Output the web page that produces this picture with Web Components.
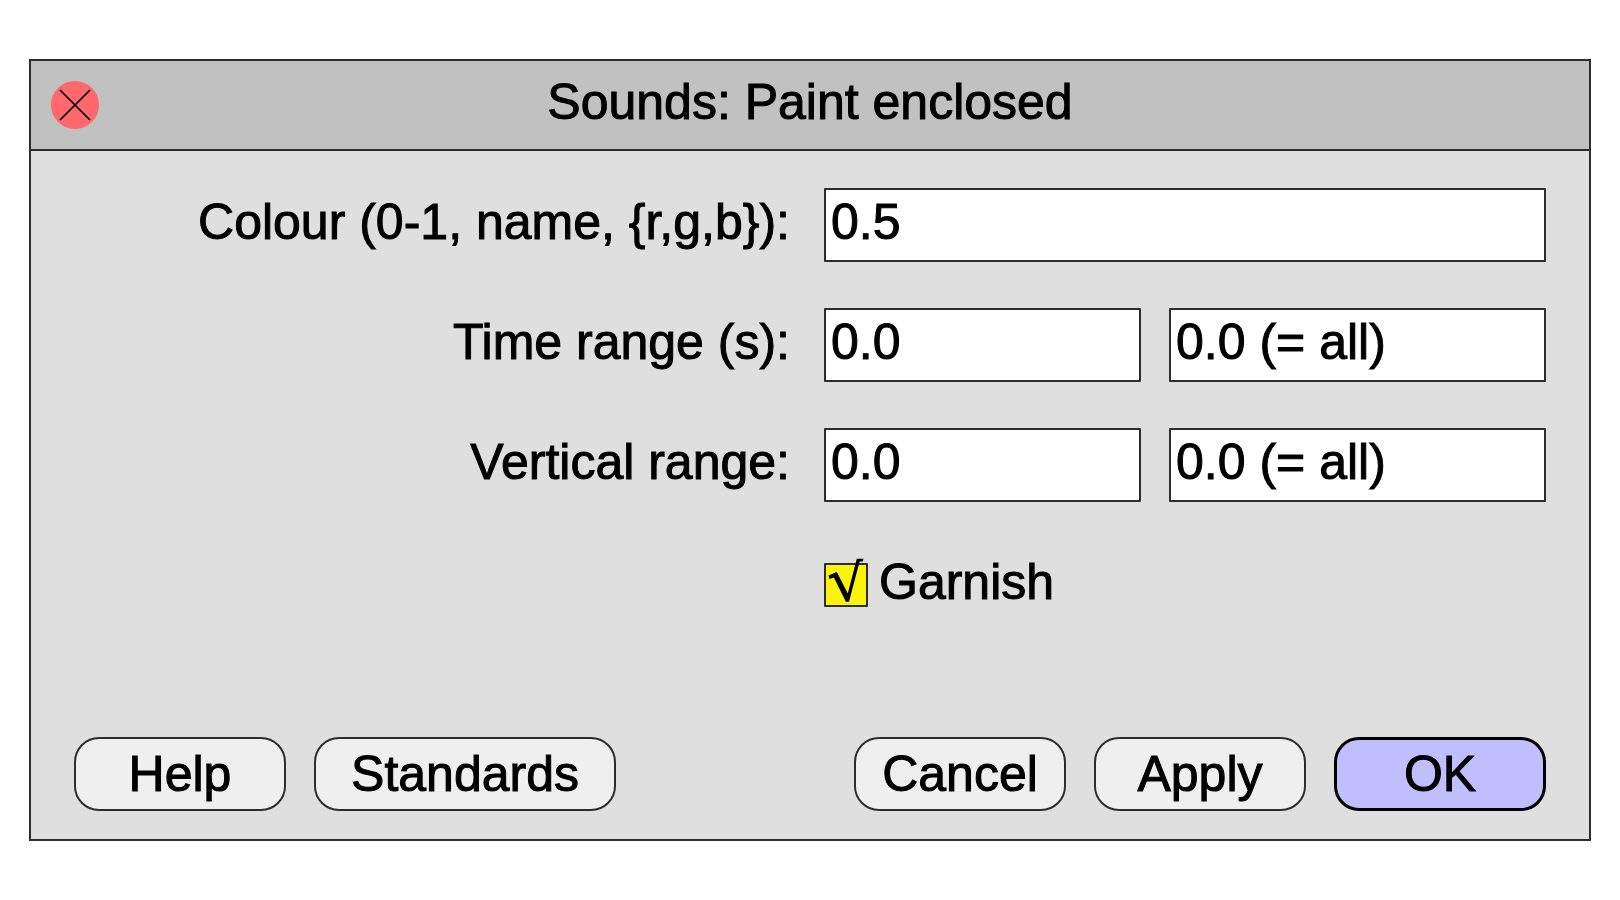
<!DOCTYPE html>
<html lang="en">
<head>
<meta charset="utf-8">
<title>Sounds: Paint enclosed</title>
<style>
html { background: #fff; }
body { margin: 0; padding: 59px 29px; font: 50px/68px "Liberation Sans", Arial, sans-serif; color: #000; -webkit-text-stroke: 1px #000; }
</style>
</head>
<body>
<dialog-window heading="Sounds: Paint enclosed">
  <field-row label="Colour (0-1, name, {r,g,b}):" values="0.5"></field-row>
  <field-row label="Time range (s):" values="0.0|0.0 (= all)"></field-row>
  <field-row label="Vertical range:" values="0.0|0.0 (= all)"></field-row>
  <check-row label="Garnish" checked></check-row>
  <push-button slot="left">Help</push-button>
  <push-button slot="left" wide>Standards</push-button>
  <push-button slot="right">Cancel</push-button>
  <push-button slot="right">Apply</push-button>
  <push-button slot="right" primary>OK</push-button>
</dialog-window>
<script>
const attach = (el, html) => { el.attachShadow({ mode: "open" }).innerHTML = html; };

customElements.define("dialog-window", class extends HTMLElement {
  constructor() {
    super();
    attach(this, `
      <style>
        :host { display: block; border: 2px solid #2d2d2d; background: #dfdfdf; }
        header { display: grid; grid-template-columns: 48px 1fr 48px; align-items: center;
          padding: 10px 20px; background: #c1c1c1; border-bottom: 2px solid #2d2d2d; }
        h1 { margin: 0; padding-bottom: 6px; line-height: 62px; font-size: inherit; font-weight: normal; text-align: center; }
        button { width: 48px; height: 48px; padding: 0; border: 0; border-radius: 50%; background: #ff686c; }
        svg { display: block; }
        main { display: grid; gap: 46px; padding: 37px 43px 0; }
        footer { display: flex; justify-content: space-between; padding: 115px 43px 28px; }
        footer div { display: flex; gap: 28px; }
      </style>
      <header>
        <button type="button" aria-label="Close">
          <svg width="48" height="48" viewBox="0 0 48 48"><path d="M9 9L39 39M39 9L9 39" stroke="#000" stroke-width="1.7"/></svg>
        </button>
        <h1></h1>
      </header>
      <main><slot></slot></main>
      <footer><div><slot name="left"></slot></div><div><slot name="right"></slot></div></footer>`);
  }
  connectedCallback() { this.shadowRoot.querySelector("h1").textContent = this.getAttribute("heading"); }
});

customElements.define("field-row", class extends HTMLElement {
  constructor() {
    super();
    attach(this, `
      <style>
        :host { display: grid; grid-template-columns: 716fr 722fr; gap: 34px; }
        label { padding-bottom: 6px; text-align: right; white-space: nowrap; }
        div { display: grid; grid-template-columns: 317fr 377fr; gap: 28px; }
        input { box-sizing: border-box; width: 100%; height: 74px; margin: 0; padding: 0 5px 6px;
          border: 2px solid #2d2d2d; border-radius: 1px; background: #fff; color: inherit; font: inherit; outline: 0; }
        input:only-child { grid-column: 1 / -1; }
      </style>
      <label for="first"></label><div></div>`);
  }
  connectedCallback() {
    const label = this.getAttribute("label");
    this.shadowRoot.querySelector("label").textContent = label;
    const inputs = this.getAttribute("values").split("|").map((value, i) => {
      const input = document.createElement("input");
      input.type = "text";
      input.setAttribute("value", value);
      if (i === 0) input.id = "first"; else input.setAttribute("aria-label", label + " upper limit");
      return input;
    });
    this.shadowRoot.querySelector("div").replaceChildren(...inputs);
  }
});

customElements.define("check-row", class extends HTMLElement {
  constructor() {
    super();
    attach(this, `
      <style>
        :host { display: grid; grid-template-columns: 716fr 722fr; gap: 34px; }
        div { grid-column: 2; display: flex; align-items: center; gap: 11px; height: 74px; }
        span { position: relative; flex: none; width: 44px; height: 44px; }
        input { appearance: none; box-sizing: border-box; display: block; width: 44px; height: 44px; margin: 0;
          border: 2px solid #2d2d2d; border-radius: 1px; background: #fbf30c; }
        svg { position: absolute; inset: 0; overflow: visible; pointer-events: none; }
        input:not(:checked) + svg { display: none; }
        label { padding-bottom: 6px; }
      </style>
      <div>
        <span><input type="checkbox" id="box"><svg width="44" height="44" viewBox="0 0 44 44" aria-hidden="true"><path d="M4.6 12.4L12.8 9L23.8 30.5L32.8 -4.2H39.4L38.8 -1.4H35.6L25 38.8H21.9L9.9 14.4L5.5 16Z"/></svg></span>
        <label for="box"></label>
      </div>`);
  }
  connectedCallback() {
    this.shadowRoot.querySelector("label").textContent = this.getAttribute("label");
    this.shadowRoot.querySelector("input").checked = this.hasAttribute("checked");
  }
});

customElements.define("push-button", class extends HTMLElement {
  constructor() {
    super();
    attach(this, `
      <style>
        :host { display: block; width: 212px; }
        :host([wide]) { width: 302px; }
        button { box-sizing: border-box; width: 100%; height: 74px; padding: 0; border: 2px solid #2d2d2d;
          border-radius: 25px; background: #efefef; color: inherit; font: inherit; line-height: 64px; }
        :host([primary]) button { background: #c0beff; border: 3px solid #000; }
      </style>
      <button type="button"><slot></slot></button>`);
  }
});
</script>
</body>
</html>
